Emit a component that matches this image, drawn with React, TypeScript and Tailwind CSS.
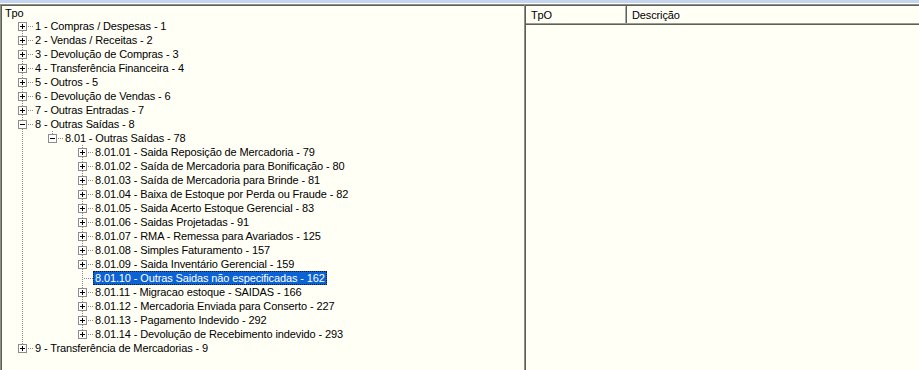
import React from 'react';

interface TreeNode {
  label: string;
  children?: TreeNode[];
  expanded?: boolean;
  collapsed?: boolean; // has children, not loaded/shown
  selected?: boolean;
}

interface FlatRow {
  node: TreeNode;
  level: number;
  ancestors: boolean[];
  hasNext: boolean;
  first: boolean;
}

const sub = (label: string, collapsed = true, selected = false): TreeNode => ({ label, collapsed, selected });

const tree: TreeNode[] = [
  sub('1 - Compras / Despesas - 1'),
  sub('2 - Vendas / Receitas - 2'),
  sub('3 - Devolução de Compras - 3'),
  sub('4 - Transferência Financeira - 4'),
  sub('5 - Outros - 5'),
  sub('6 - Devolução de Vendas - 6'),
  sub('7 - Outras Entradas - 7'),
  {
    label: '8 - Outras Saídas - 8',
    expanded: true,
    children: [
      {
        label: '8.01 - Outras Saídas - 78',
        expanded: true,
        children: [
          sub('8.01.01 - Saida Reposição de Mercadoria - 79'),
          sub('8.01.02 - Saída de Mercadoria para Bonificação - 80'),
          sub('8.01.03 - Saída de Mercadoria para Brinde - 81'),
          sub('8.01.04 - Baixa de Estoque por Perda ou Fraude - 82'),
          sub('8.01.05 - Saida Acerto Estoque Gerencial - 83'),
          sub('8.01.06 - Saidas Projetadas - 91'),
          sub('8.01.07 - RMA - Remessa para Avariados - 125'),
          sub('8.01.08 - Simples Faturamento - 157'),
          sub('8.01.09 - Saida Inventário Gerencial - 159'),
          sub('8.01.10 - Outras Saidas não especificadas - 162', false, true),
          sub('8.01.11 - Migracao estoque - SAIDAS - 166'),
          sub('8.01.12 - Mercadoria Enviada para Conserto - 227'),
          sub('8.01.13 - Pagamento Indevido - 292'),
          sub('8.01.14 - Devolução de Recebimento indevido - 293'),
        ],
      },
    ],
  },
  sub('9 - Transferência de Mercadorias - 9'),
];

function flatten(nodes: TreeNode[], level: number, ancestors: boolean[], out: FlatRow[]) {
  nodes.forEach((node, i) => {
    const hasNext = i < nodes.length - 1;
    out.push({ node, level, ancestors, hasNext, first: level === 0 && i === 0 });
    if (node.children && node.expanded) flatten(node.children, level + 1, [...ancestors, hasNext], out);
  });
}

const LINE = '#8a8a8a';

// dotted connectors + expand button, drawn like the old win32 tree
function Gutter({ row }: { row: FlatRow }) {
  const width = 30 * row.level + 26;
  const cx = 15 + 30 * row.level;
  const hasButton = row.node.expanded || row.node.collapsed;
  return (
    <svg width={width} height={14} shapeRendering="crispEdges" className="shrink-0">
      {row.ancestors.map((next, k) =>
        next ? (
          <line key={k} x1={15 + 30 * k + 0.5} y1={0} x2={15 + 30 * k + 0.5} y2={14} stroke={LINE} strokeDasharray="1 1" />
        ) : null
      )}
      {!row.first && <line x1={cx + 0.5} y1={0} x2={cx + 0.5} y2={7} stroke={LINE} strokeDasharray="1 1" />}
      {row.hasNext && <line x1={cx + 0.5} y1={8} x2={cx + 0.5} y2={14} stroke={LINE} strokeDasharray="1 1" />}
      <line x1={cx + 2} y1={7.5} x2={width} y2={7.5} stroke={LINE} strokeDasharray="1 1" />
      {hasButton && (
        <g>
          <rect x={cx - 3.5} y={3.5} width={8} height={8} fill="#ffffff" stroke="#8c8c8c" />
          <path d={`M${cx - 2} 7.5H${cx + 3}`} stroke="#000" />
          {row.node.collapsed && <path d={`M${cx + 0.5} 5V10`} stroke="#000" />}
        </g>
      )}
    </svg>
  );
}

export default function App() {
  const rows: FlatRow[] = [];
  flatten(tree, 0, [], rows);

  return (
    <div className="flex h-[370px] w-[919px] flex-col bg-[#fffff6] font-['Liberation_Sans',Arial,sans-serif] text-[11px] tracking-[-0.12px] text-black">
      <div className="h-[3px] bg-[#c5d4ef]" />
      <div className="h-px bg-white" />
      <div className="flex min-h-0 flex-1">
        {/* tree panel */}
        <div className="w-[524px] border-l border-t border-[#8d9084]">
          <div className="h-full border-l border-t border-[#5d6054]">
            <div className="h-[13px] pl-[3px] leading-[15px]">Tpo</div>
            {rows.map((row, i) => (
              <div key={i} className="flex h-[14px] items-center pl-[5px]">
                <Gutter row={row} />
                {row.node.selected ? (
                  <span className="whitespace-nowrap border border-dotted border-[#1b1b1b] bg-[#0a62d4] px-px leading-[12px] text-white">
                    {row.node.label}
                  </span>
                ) : (
                  <span className="whitespace-nowrap border border-transparent px-px leading-[12px]">{row.node.label}</span>
                )}
              </div>
            ))}
          </div>
        </div>

        {/* list panel */}
        <div className="flex-1 border-l border-t border-[#8d9084]">
          <div className="h-full border-l border-t border-[#5d6054]">
            <div className="border-b border-[#5d6054]">
              <div className="flex h-[18px] border-b border-[#9a9d91]">
                <div className="w-[101px] border-r border-[#5d6054]">
                  <div className="h-full border-l border-r border-t border-l-white border-r-[#a8aa9f] border-t-white pl-[4px] leading-[17px]">
                    TpO
                  </div>
                </div>
                <div className="flex-1 border-l border-t border-white pl-[4px] leading-[17px]">Descrição</div>
              </div>
            </div>
          </div>
        </div>
      </div>
    </div>
  );
}
